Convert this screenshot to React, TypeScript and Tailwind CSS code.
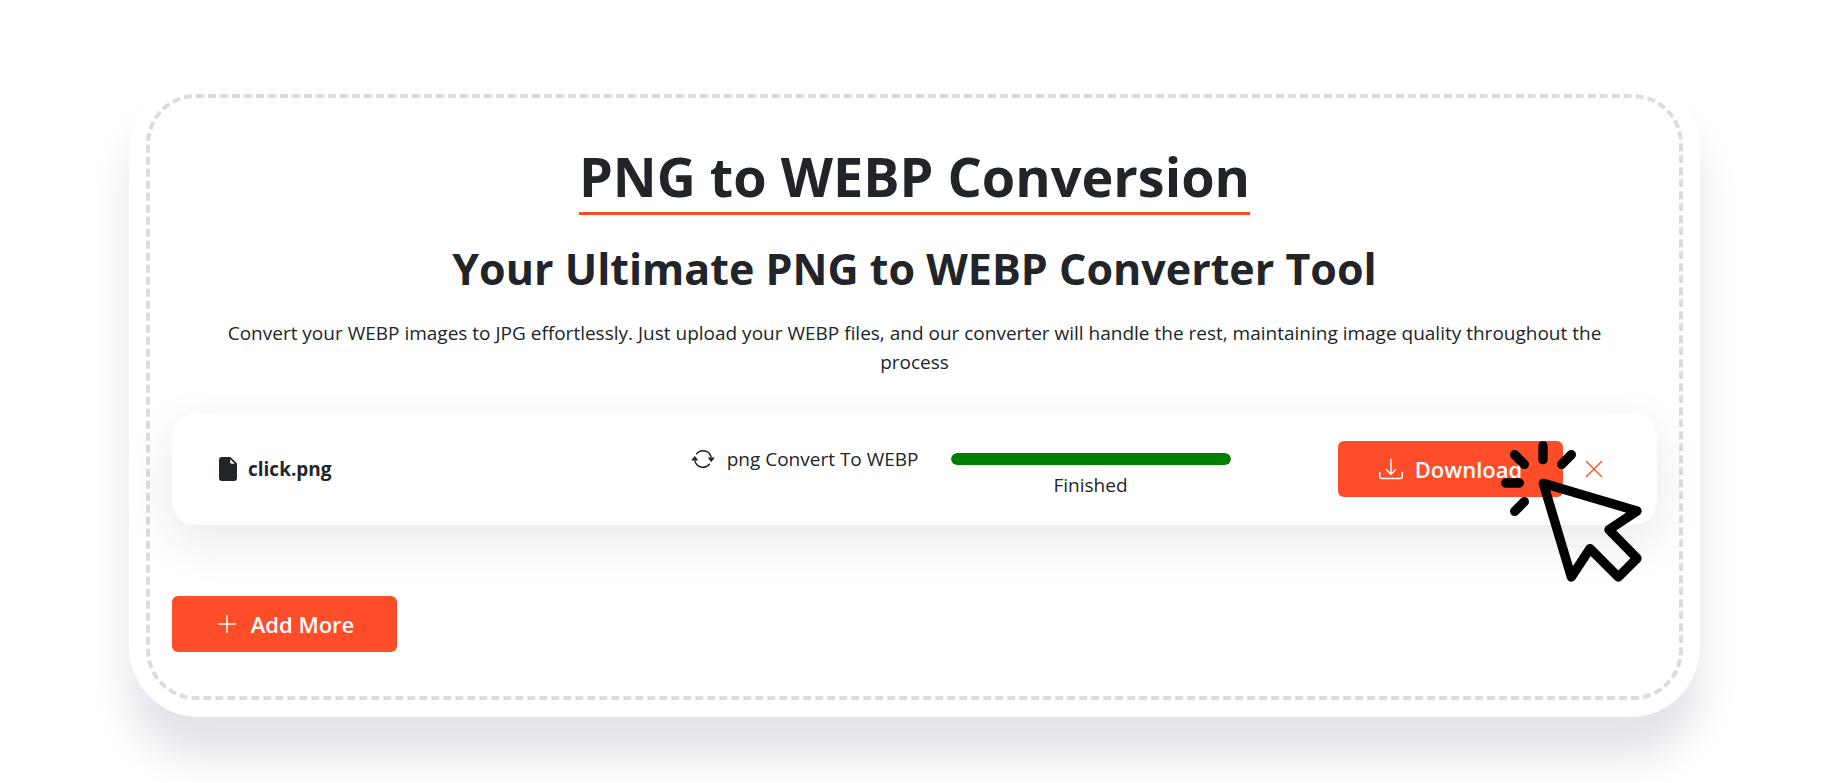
import { BsArrowRepeat, BsDownload, BsFileEarmarkFill, BsPlusLg, BsXLg } from "react-icons/bs";

type FileRowProps = {
  name: string;
  from: string;
  to: string;
  progress: number;
  status: string;
};

const ClickCursor: React.FC<{ className?: string }> = ({ className }) => (
  <svg
    viewBox="540 64 423 423"
    className={className}
    fill="none"
    stroke="#000"
    strokeWidth={28}
    strokeLinecap="round"
    strokeLinejoin="round"
    aria-hidden="true"
  >
    <path d="M667 191 948 274 864 330 948 416 892 472 807 387 751 472Z" />
    <path d="M666 78V120M581 105 610 134M751 105 722 134M554 190H595M610 246 581 275" />
  </svg>
);

const FileRow: React.FC<FileRowProps> = ({ name, from, to, progress, status }) => {
  return (
    <div className="grid grid-cols-[11fr_15fr_auto] items-center rounded-3xl bg-white py-7 pr-13 pl-11 shadow-[0_16px_48px_rgba(33,37,41,0.1)]">
      <div className="flex items-center gap-2 text-[19px] font-bold">
        <BsFileEarmarkFill className="size-6 shrink-0" />
        <span>{name}</span>
      </div>

      <div className="flex items-start pt-1">
        <div className="flex items-center gap-3 text-[19px] leading-7 font-medium">
          <BsArrowRepeat className="size-6 shrink-0" />
          <span>
            {from} Convert To {to}
          </span>
        </div>
        <div className="ml-8 w-[280px]">
          <div className="flex h-7 items-center">
            <div
              role="progressbar"
              aria-label={name}
              aria-valuenow={progress}
              className="h-3 w-full overflow-hidden rounded-full bg-gray-200"
            >
              <div className="h-full rounded-full bg-[#008000]" style={{ width: `${progress}%` }} />
            </div>
          </div>
          <p className="text-center text-[19px] leading-6 font-medium">{status}</p>
        </div>
      </div>

      <div className="flex items-center gap-5">
        <div className="relative">
          <button
            type="button"
            className="flex h-14 w-[225px] items-center justify-center gap-3 rounded-md bg-[#ff4c29] text-[22px] font-semibold text-white"
          >
            <BsDownload className="size-6 shrink-0" />
            Download
          </button>
          <ClickCursor className="pointer-events-none absolute top-0 left-[163px] size-[141px]" />
        </div>
        <button type="button" aria-label="Remove" className="text-[#ff4c29]">
          <BsXLg className="size-[22px]" />
        </button>
      </div>
    </div>
  );
};

const App: React.FC = () => {
  return (
    <div className="min-h-screen bg-white pt-[77px] pr-[133px] pl-[129px] font-['Open_Sans','Noto_Sans',sans-serif] text-[#212529]">
      <main className="rounded-[70px] bg-white p-[17px] shadow-[0_40px_40px_#e2e4ea]">
        <div className="rounded-[50px] border-4 border-dashed border-[#dcdcdc] px-[22px] pt-[42px] pb-11">
          <div className="text-center">
            <h1 className="inline-block border-b-[3px] border-[#ff4c29] text-[54px] leading-[72px] font-bold">
              PNG to WEBP Conversion
            </h1>
            <h2 className="mt-6 text-[43px] leading-[60px] font-bold">
              Your Ultimate PNG to WEBP Converter Tool
            </h2>
            <p className="mt-5 px-12 text-[19px] leading-[29px]">
              Convert your WEBP images to JPG effortlessly. Just upload your WEBP files, and our
              converter will handle the rest, maintaining image quality throughout the process
            </p>
          </div>

          <div className="mt-9">
            <FileRow name="click.png" from="png" to="WEBP" progress={100} status="Finished" />
          </div>

          <button
            type="button"
            className="mt-[71px] flex h-14 w-[225px] items-center justify-center gap-3 rounded-md bg-[#ff4c29] text-[22px] font-semibold text-white"
          >
            <BsPlusLg className="size-6 shrink-0" />
            Add More
          </button>
        </div>
      </main>
    </div>
  );
};

export default App;
